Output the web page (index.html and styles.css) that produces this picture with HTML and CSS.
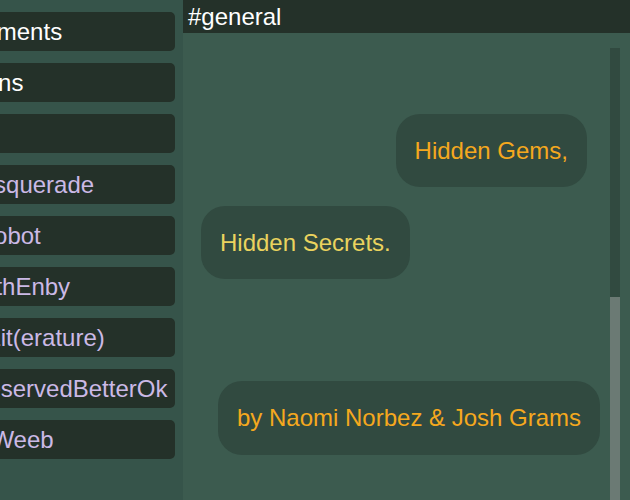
FILE: index.html
```html
<!DOCTYPE html>
<html lang="en">
<head>
<meta charset="utf-8">
<title>#general</title>
<link rel="stylesheet" href="styles.css">
</head>
<body>
<div class="app">
  <nav class="sidebar">
    <ul class="channels">
      <li class="channel channel-system">#announcements</li>
      <li class="channel channel-system">#submissions</li>
      <li class="channel channel-system">#general</li>
      <li class="channel">#SecretMasquerade</li>
      <li class="channel">#FriendlyRobot</li>
      <li class="channel">#BrunchWithEnby</li>
      <li class="channel">#ThatIsSoLit(erature)</li>
      <li class="channel">#TheCatDeservedBetterOk</li>
      <li class="channel">#HopelessWeeb</li>
    </ul>
  </nav>
  <main class="main">
    <header class="topbar">#general</header>
    <section class="chat">
      <div class="messages">
        <p class="msg msg-first">Hidden Gems,</p>
        <p class="msg msg-second">Hidden Secrets.</p>
        <p class="msg msg-credit">by Naomi Norbez &amp; Josh Grams</p>
      </div>
      <div class="scrollbar"><div class="thumb"></div></div>
    </section>
  </main>
</div>
</body>
</html>
```

FILE: styles.css
```css
* { box-sizing: border-box; }

html, body {
  margin: 0;
  padding: 0;
  height: 100%;
}

body {
  font-family: "Liberation Sans", Arial, sans-serif;
  font-size: 24px;
  line-height: 27px;
  background: #3c5b4f;
  overflow: hidden;
}

.app {
  display: grid;
  grid-template-columns: 183px 1fr;
  height: 100vh;
}

.sidebar {
  background: #36544a;
  overflow: hidden;
  padding: 12px 8px 0 0;
}

.channels {
  list-style: none;
  margin: 0 0 0 -130px;
  padding: 0;
  display: flex;
  flex-direction: column;
  gap: 12px;
}

.channel {
  background: #243129;
  border-radius: 5px;
  padding: 6px 8px;
  white-space: nowrap;
  overflow: hidden;
  color: #cbb9e6;
}

.channel-system {
  color: #ffffff;
}

.main {
  display: flex;
  flex-direction: column;
  min-width: 0;
}

.topbar {
  background: #243129;
  color: #ffffff;
  padding: 3px 5px;
  height: 33px;
}

.chat {
  flex: 1;
  display: flex;
  padding: 15px 10px 0 0;
  min-height: 0;
}

.messages {
  flex: 1;
  display: flex;
  flex-direction: column;
  align-items: flex-start;
}

.msg {
  margin: 0;
  background: #314a40;
  border-radius: 24px;
  padding: 23px 19px;
  color: #f5a81e;
  white-space: nowrap;
}

.msg-first {
  align-self: flex-end;
  margin: 66px 23px 0 0;
}

.msg-second {
  margin: 19px 0 0 18px;
  color: #ead35e;
}

.msg-credit {
  margin: 102px 0 0 35px;
  padding-top: 23px;
  padding-bottom: 24px;
}

.scrollbar {
  width: 10px;
  background: #314a40;
  display: flex;
  flex-direction: column;
}

.thumb {
  flex: 1;
  margin-top: 249px;
  background: #6b7a74;
}
```
